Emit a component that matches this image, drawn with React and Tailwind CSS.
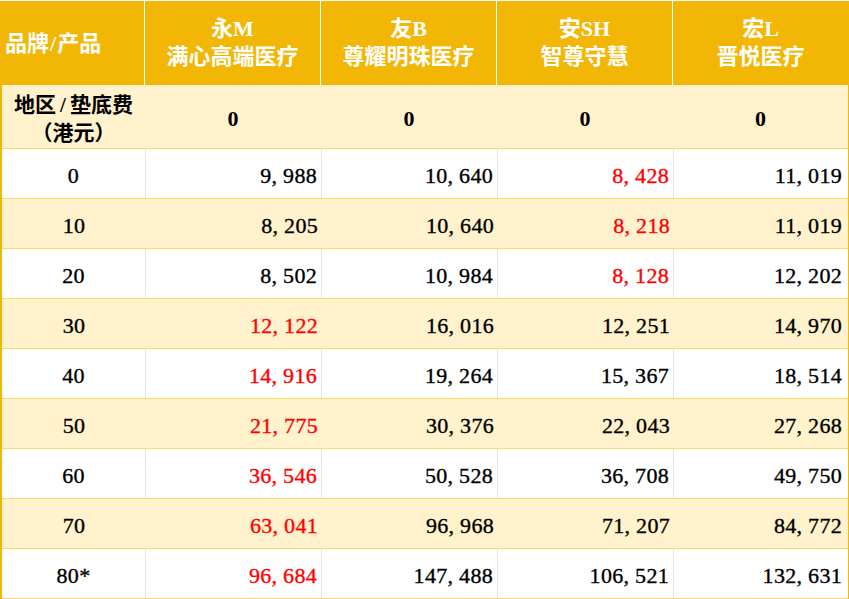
import React from "react";

const cols = [
  { brand: "永M", name: "满心高端医疗" },
  { brand: "友B", name: "尊耀明珠医疗" },
  { brand: "安SH", name: "智尊守慧" },
  { brand: "宏L", name: "晋悦医疗" },
];

// [age, values, red flags per column]
const rows = [
  ["0", ["9, 988", "10, 640", "8, 428", "11, 019"], [0, 0, 1, 0]],
  ["10", ["8, 205", "10, 640", "8, 218", "11, 019"], [0, 0, 1, 0]],
  ["20", ["8, 502", "10, 984", "8, 128", "12, 202"], [0, 0, 1, 0]],
  ["30", ["12, 122", "16, 016", "12, 251", "14, 970"], [1, 0, 0, 0]],
  ["40", ["14, 916", "19, 264", "15, 367", "18, 514"], [1, 0, 0, 0]],
  ["50", ["21, 775", "30, 376", "22, 043", "27, 268"], [1, 0, 0, 0]],
  ["60", ["36, 546", "50, 528", "36, 708", "49, 750"], [1, 0, 0, 0]],
  ["70", ["63, 041", "96, 968", "71, 207", "84, 772"], [1, 0, 0, 0]],
  ["80*", ["96, 684", "147, 488", "106, 521", "132, 631"], [1, 0, 0, 0]],
];

const font = { fontFamily: '"Liberation Serif", "Noto Sans CJK SC", serif' };

function App() {
  return (
    <div className="w-[849px] h-[599px] bg-white pt-px" style={font}>
      <div className="w-[849px] border-l-2 border-r border-[#f2b705]">
        {/* header */}
        <div className="flex h-[84px] bg-[#f2b705] text-white font-bold">
          <div className="w-[143px] shrink-0 border-r border-white flex items-center pl-[3px] text-[22px]">
            品牌<span className="mx-[1px]">/</span>产品
          </div>
          {cols.map((c, i) => (
            <div
              key={c.brand}
              className={
                "flex flex-col items-center justify-center text-[22px] leading-[28px] " +
                (i < 3 ? "w-[176px] shrink-0 border-r border-white" : "flex-1")
              }
            >
              <span>{c.brand}</span>
              <span>{c.name}</span>
            </div>
          ))}
        </div>

        {/* deductible row */}
        <div className="flex h-[64px] pt-[4px] bg-[#fff2cc] border-b border-[#ffd966] font-bold text-black">
          <div className="w-[143px] shrink-0 flex flex-col items-center justify-center text-[21px] leading-[28px]">
            <span>
              地区<span className="mx-[4px]">/</span>垫底费
            </span>
            <span>（港元）</span>
          </div>
          {cols.map((c, i) => (
            <div
              key={c.brand}
              className={
                "flex items-center justify-center text-[22px] " +
                (i < 3 ? "w-[176px] shrink-0" : "flex-1")
              }
            >
              0
            </div>
          ))}
        </div>

        {rows.map(([age, vals, red], r) => {
          const striped = r % 2 === 1;
          return (
            <div
              key={age}
              className={
                "flex h-[50px] border-b border-[#ffd966] text-[22px] tracking-[0.3px] [-webkit-text-stroke:0.35px] " +
                (striped ? "bg-[#fff2cc]" : "bg-white")
              }
            >
              <div
                className={
                  "w-[144px] shrink-0 flex items-center justify-center pt-[4px] text-black " +
                  (striped ? "" : "border-r border-[#e3e3e3]")
                }
              >
                {age}
              </div>
              {vals.map((v, i) => (
                <div
                  key={i}
                  className={
                    "flex items-center justify-end pt-[4px] " +
                    (red[i] ? "text-[#ff0000] " : "text-black ") +
                    (i < 3 ? "w-[176px] shrink-0 pr-[4px] " : "flex-1 pr-[6px] ") +
                    (i < 3 && !striped ? "border-r border-[#e3e3e3]" : "")
                  }
                >
                  {v}
                </div>
              ))}
            </div>
          );
        })}
      </div>
    </div>
  );
}

export default App;
